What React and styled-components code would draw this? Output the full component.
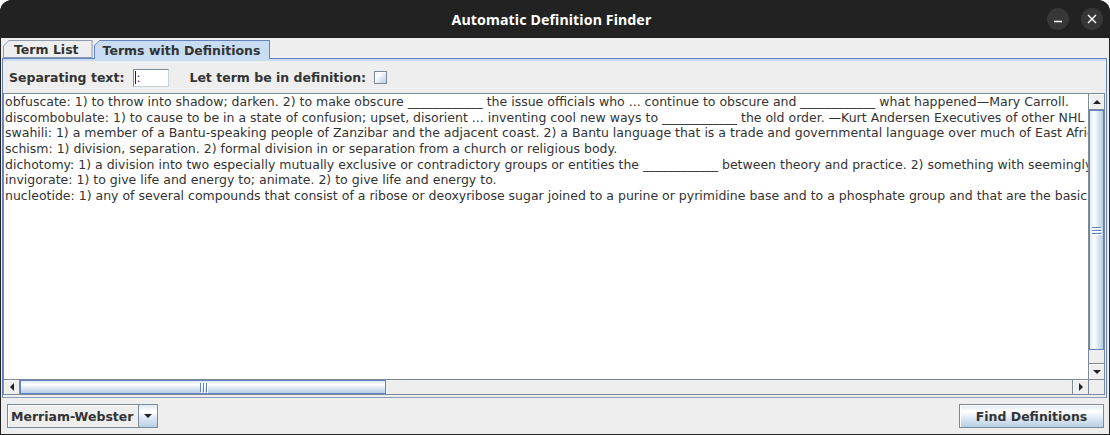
import React from 'react'
import styled, { createGlobalStyle, css } from 'styled-components'

const ocean = {
  primary1: '#6382BF',
  secondary1: '#7A8A99',
  control: '#EEEEEE',
  select: '#C8DDF2',
  text: '#333333',
}

const oceanGradient = dir =>
  `linear-gradient(${dir}, #DDE8F3 0%, #FFFFFF 30%, #DDE8F3 60%, #B8CFE5 100%)`

const GlobalStyle = createGlobalStyle`
  html, body {
    margin: 0;
    padding: 0;
    background: #ffffff;
  }
  * { box-sizing: border-box; }
`

const Window = styled.div`
  width: 1110px;
  height: 435px;
  display: flex;
  flex-direction: column;
  background: #242424;
  border-radius: 12px 12px 0 0;
  overflow: hidden;
  font-family: "DejaVu Sans", sans-serif;
`

const TitleBar = styled.div`
  height: 38px;
  flex: none;
  display: grid;
  grid-template-columns: 1fr auto 1fr;
  align-items: center;
  padding: 0 7px 0 0;
  background: #222222;
`

const Title = styled.div`
  grid-column: 2;
  color: #ffffff;
  font-family: "Noto Sans", "DejaVu Sans", sans-serif;
  font-weight: 700;
  font-size: 14.2px;
  letter-spacing: 0.1px;
`

const WindowButtons = styled.div`
  grid-column: 3;
  justify-self: end;
  display: flex;
  gap: 12px;
`

const RoundButton = styled.div`
  width: 22px;
  height: 22px;
  border-radius: 50%;
  background: #373737;
  display: flex;
  align-items: center;
  justify-content: center;
`

const Body = styled.div`
  flex: 1;
  display: flex;
  flex-direction: column;
  margin: 0 1px 1px 1px;
  padding: 2px 2px 0 1px;
  background: ${ocean.control};
  color: ${ocean.text};
`

const TabStrip = styled.div`
  height: 18px;
  flex: none;
  display: flex;
  align-items: flex-end;
  gap: 1px;
  padding-left: 1px;
  position: relative;
  z-index: 1;
`

const TabEdge = styled.div`
  height: ${p => (p.$active ? '19px' : '18px')};
  margin-bottom: ${p => (p.$active ? '-1px' : '0')};
  padding: 1px 1px ${p => (p.$active ? '0' : '1px')} 1px;
  background: ${p => (p.$active ? ocean.primary1 : '#8C9BB0')};
  clip-path: polygon(6px 0, 100% 0, 100% 100%, 0 100%, 0 6px);
`

const TabFace = styled.div`
  height: 100%;
  display: flex;
  align-items: center;
  padding: 0 ${p => (p.$active ? '9px 0 8px' : '13px 0 10px')};
  background: ${p => (p.$active ? ocean.select : ocean.control)};
  clip-path: polygon(5px 0, 100% 0, 100% 100%, 0 100%, 0 5px);
  font-size: 12.5px;
  font-weight: 700;
  white-space: nowrap;
`

const TabPane = styled.div`
  height: 340px;
  flex: none;
  display: flex;
  flex-direction: column;
  border: 1px solid ${ocean.primary1};
  border-bottom-color: #8a9cb8;
  box-shadow: inset 0 2px 0 ${ocean.select};
  padding: 3px 1px 2px 0;
`

const OptionsRow = styled.div`
  height: 31px;
  flex: none;
  display: flex;
  align-items: center;
  padding-left: 6px;
`

const Label = styled.span`
  font-size: 12.5px;
  font-weight: 700;
  white-space: nowrap;
  margin-right: ${p => p.$gap || 0}px;
`

const TextField = styled.div`
  width: 36px;
  height: 18px;
  margin: 0 20px 0 9px;
  border: 1px solid ${ocean.secondary1};
  border-right-color: #c9d3dd;
  border-bottom-color: #c9d3dd;
  background: #ffffff;
  display: flex;
  align-items: center;
  padding-left: 1px;
  font-size: 12px;
  color: #5a3a7a;
`

const Caret = styled.span`
  width: 1px;
  height: 13px;
  background: #222;
`

const CheckBox = styled.div`
  width: 13px;
  height: 13px;
  border: 1px solid ${ocean.secondary1};
  background: ${oceanGradient('135deg')};
  box-shadow: inset 1px 1px 0 #ffffff;
`

const ScrollPane = styled.div`
  flex: 1;
  display: grid;
  grid-template-columns: 1fr 16px;
  grid-template-rows: 1fr 15px;
  border: 1px solid ${ocean.secondary1};
  background: ${ocean.control};
`

const Viewport = styled.div`
  overflow: hidden;
  background: #ffffff;
  padding: 0 0 0 1px;
`

const Line = styled.div`
  font-size: 12.5px;
  line-height: 15.66px;
  color: #333333;
  white-space: pre;
`

const VBar = styled.div`
  display: flex;
  flex-direction: column;
  border-left: 1px solid ${ocean.secondary1};
  background: ${ocean.control};
`

const HBar = styled.div`
  display: flex;
  border-top: 1px solid ${ocean.secondary1};
  background: ${ocean.control};
`

const Corner = styled.div`
  background: ${ocean.control};
  border-top: 1px solid ${ocean.secondary1};
  border-left: 1px solid ${ocean.secondary1};
`

const ArrowButton = styled.div`
  flex: none;
  width: ${p => (p.$horizontal ? '16px' : '100%')};
  height: ${p => (p.$horizontal ? '100%' : '16px')};
  display: flex;
  align-items: center;
  justify-content: center;
  background: ${ocean.control};
  box-shadow: inset 1px 1px 0 #ffffff;
  ${p => p.$edge === 'top' && css`border-bottom: 1px solid ${ocean.secondary1};`}
  ${p => p.$edge === 'bottom' && css`border-top: 1px solid ${ocean.secondary1};`}
  ${p => p.$edge === 'left' && css`border-right: 1px solid ${ocean.secondary1};`}
  ${p => p.$edge === 'right' && css`border-left: 1px solid ${ocean.secondary1};`}
`

const Arrow = styled.span`
  width: 0;
  height: 0;
  ${p => p.$dir === 'up' && css`
    border-left: 4px solid transparent;
    border-right: 4px solid transparent;
    border-bottom: 4px solid #222;
  `}
  ${p => p.$dir === 'down' && css`
    border-left: 4px solid transparent;
    border-right: 4px solid transparent;
    border-top: 4px solid #222;
  `}
  ${p => p.$dir === 'left' && css`
    border-top: 4px solid transparent;
    border-bottom: 4px solid transparent;
    border-right: 4px solid #222;
  `}
  ${p => p.$dir === 'right' && css`
    border-top: 4px solid transparent;
    border-bottom: 4px solid transparent;
    border-left: 4px solid #222;
  `}
`

const Track = styled.div`
  flex: 1;
  display: flex;
  flex-direction: ${p => (p.$horizontal ? 'row' : 'column')};
`

const Thumb = styled.div`
  flex: none;
  display: flex;
  flex-direction: ${p => (p.$horizontal ? 'row' : 'column')};
  align-items: center;
  justify-content: center;
  gap: 2px;
  border: 1px solid ${ocean.primary1};
  background: ${p => oceanGradient(p.$horizontal ? 'to bottom' : 'to right')};
`

const Grip = styled.span`
  background: ${ocean.primary1};
  box-shadow: 1px 1px 0 #ffffff;
  width: ${p => (p.$horizontal ? '1px' : '9px')};
  height: ${p => (p.$horizontal ? '9px' : '1px')};
`

const BottomBar = styled.div`
  flex: 1;
  display: flex;
  align-items: center;
  justify-content: space-between;
  padding: 0 3px 0 5px;
`

const Combo = styled.div`
  height: 24px;
  display: flex;
  border: 1px solid ${ocean.secondary1};
`

const ComboText = styled.div`
  width: 131px;
  display: flex;
  align-items: center;
  padding-left: 3px;
  background: ${ocean.control};
  box-shadow: inset 1px 1px 0 #ffffff;
  border-right: 1px solid ${ocean.secondary1};
  font-size: 12.5px;
  font-weight: 700;
`

const ComboArrow = styled.div`
  width: 18px;
  display: flex;
  align-items: center;
  justify-content: center;
  background: ${oceanGradient('to bottom')};
`

const Button = styled.button`
  width: 145px;
  height: 24px;
  padding: 0;
  border: 1px solid ${ocean.secondary1};
  background: ${oceanGradient('to bottom')};
  box-shadow: inset 1px 1px 0 #ffffff;
  font-family: "DejaVu Sans", sans-serif;
  font-size: 12.5px;
  font-weight: 700;
  color: ${ocean.text};
`

const blank = '____________'

const definitions = [
  `obfuscate: 1) to throw into shadow; darken. 2) to make obscure ${blank} the issue officials who ... continue to obscure and ${blank} what happened—Mary Carroll.`,
  `discombobulate: 1) to cause to be in a state of confusion; upset, disorient ... inventing cool new ways to ${blank} the old order. —Kurt Andersen Executives of other NHL clubs were discombobulated.`,
  'swahili: 1) a member of a Bantu-speaking people of Zanzibar and the adjacent coast. 2) a Bantu language that is a trade and governmental language over much of East Africa and in the Congo region.',
  'schism: 1) division, separation. 2) formal division in or separation from a church or religious body.',
  `dichotomy: 1) a division into two especially mutually exclusive or contradictory groups or entities the ${blank} between theory and practice. 2) something with seemingly contradictory qualities.`,
  'invigorate: 1) to give life and energy to; animate. 2) to give life and energy to.',
  'nucleotide: 1) any of several compounds that consist of a ribose or deoxyribose sugar joined to a purine or pyrimidine base and to a phosphate group and that are the basic structural units of nucleic acids.',
]

const Grips = ({ horizontal }) => (
  <>
    <Grip $horizontal={horizontal} />
    <Grip $horizontal={horizontal} />
    <Grip $horizontal={horizontal} />
  </>
)

export default function App() {
  return (
    <>
      <GlobalStyle />
      <Window>
        <TitleBar>
          <Title>Automatic Definition Finder</Title>
          <WindowButtons>
            <RoundButton>
              <svg width="10" height="10" viewBox="0 0 10 10">
                <path d="M1 7.5h8" stroke="#fff" strokeWidth="1.4" />
              </svg>
            </RoundButton>
            <RoundButton>
              <svg width="10" height="10" viewBox="0 0 10 10">
                <path d="M1 1l8 8M9 1l-8 8" stroke="#fff" strokeWidth="1.4" />
              </svg>
            </RoundButton>
          </WindowButtons>
        </TitleBar>

        <Body>
          <TabStrip>
            <TabEdge>
              <TabFace>Term List</TabFace>
            </TabEdge>
            <TabEdge $active>
              <TabFace $active>Terms with Definitions</TabFace>
            </TabEdge>
          </TabStrip>

          <TabPane>
            <OptionsRow>
              <Label>Separating text:</Label>
              <TextField>
                <Caret />
                :
              </TextField>
              <Label $gap={8}>Let term be in definition:</Label>
              <CheckBox />
            </OptionsRow>

            <ScrollPane>
              <Viewport>
                {definitions.map(d => (
                  <Line key={d}>{d}</Line>
                ))}
              </Viewport>
              <VBar>
                <ArrowButton $edge="top">
                  <Arrow $dir="up" />
                </ArrowButton>
                <Track>
                  <Thumb style={{ height: 240 }}>
                    <Grips />
                  </Thumb>
                </Track>
                <ArrowButton $edge="bottom">
                  <Arrow $dir="down" />
                </ArrowButton>
              </VBar>
              <HBar>
                <ArrowButton $horizontal $edge="left">
                  <Arrow $dir="left" />
                </ArrowButton>
                <Track $horizontal>
                  <Thumb $horizontal style={{ width: 366 }}>
                    <Grips horizontal />
                  </Thumb>
                </Track>
                <ArrowButton $horizontal $edge="right">
                  <Arrow $dir="right" />
                </ArrowButton>
              </HBar>
              <Corner />
            </ScrollPane>
          </TabPane>

          <BottomBar>
            <Combo>
              <ComboText>Merriam-Webster</ComboText>
              <ComboArrow>
                <Arrow $dir="down" />
              </ComboArrow>
            </Combo>
            <Button>Find Definitions</Button>
          </BottomBar>
        </Body>
      </Window>
    </>
  )
}
